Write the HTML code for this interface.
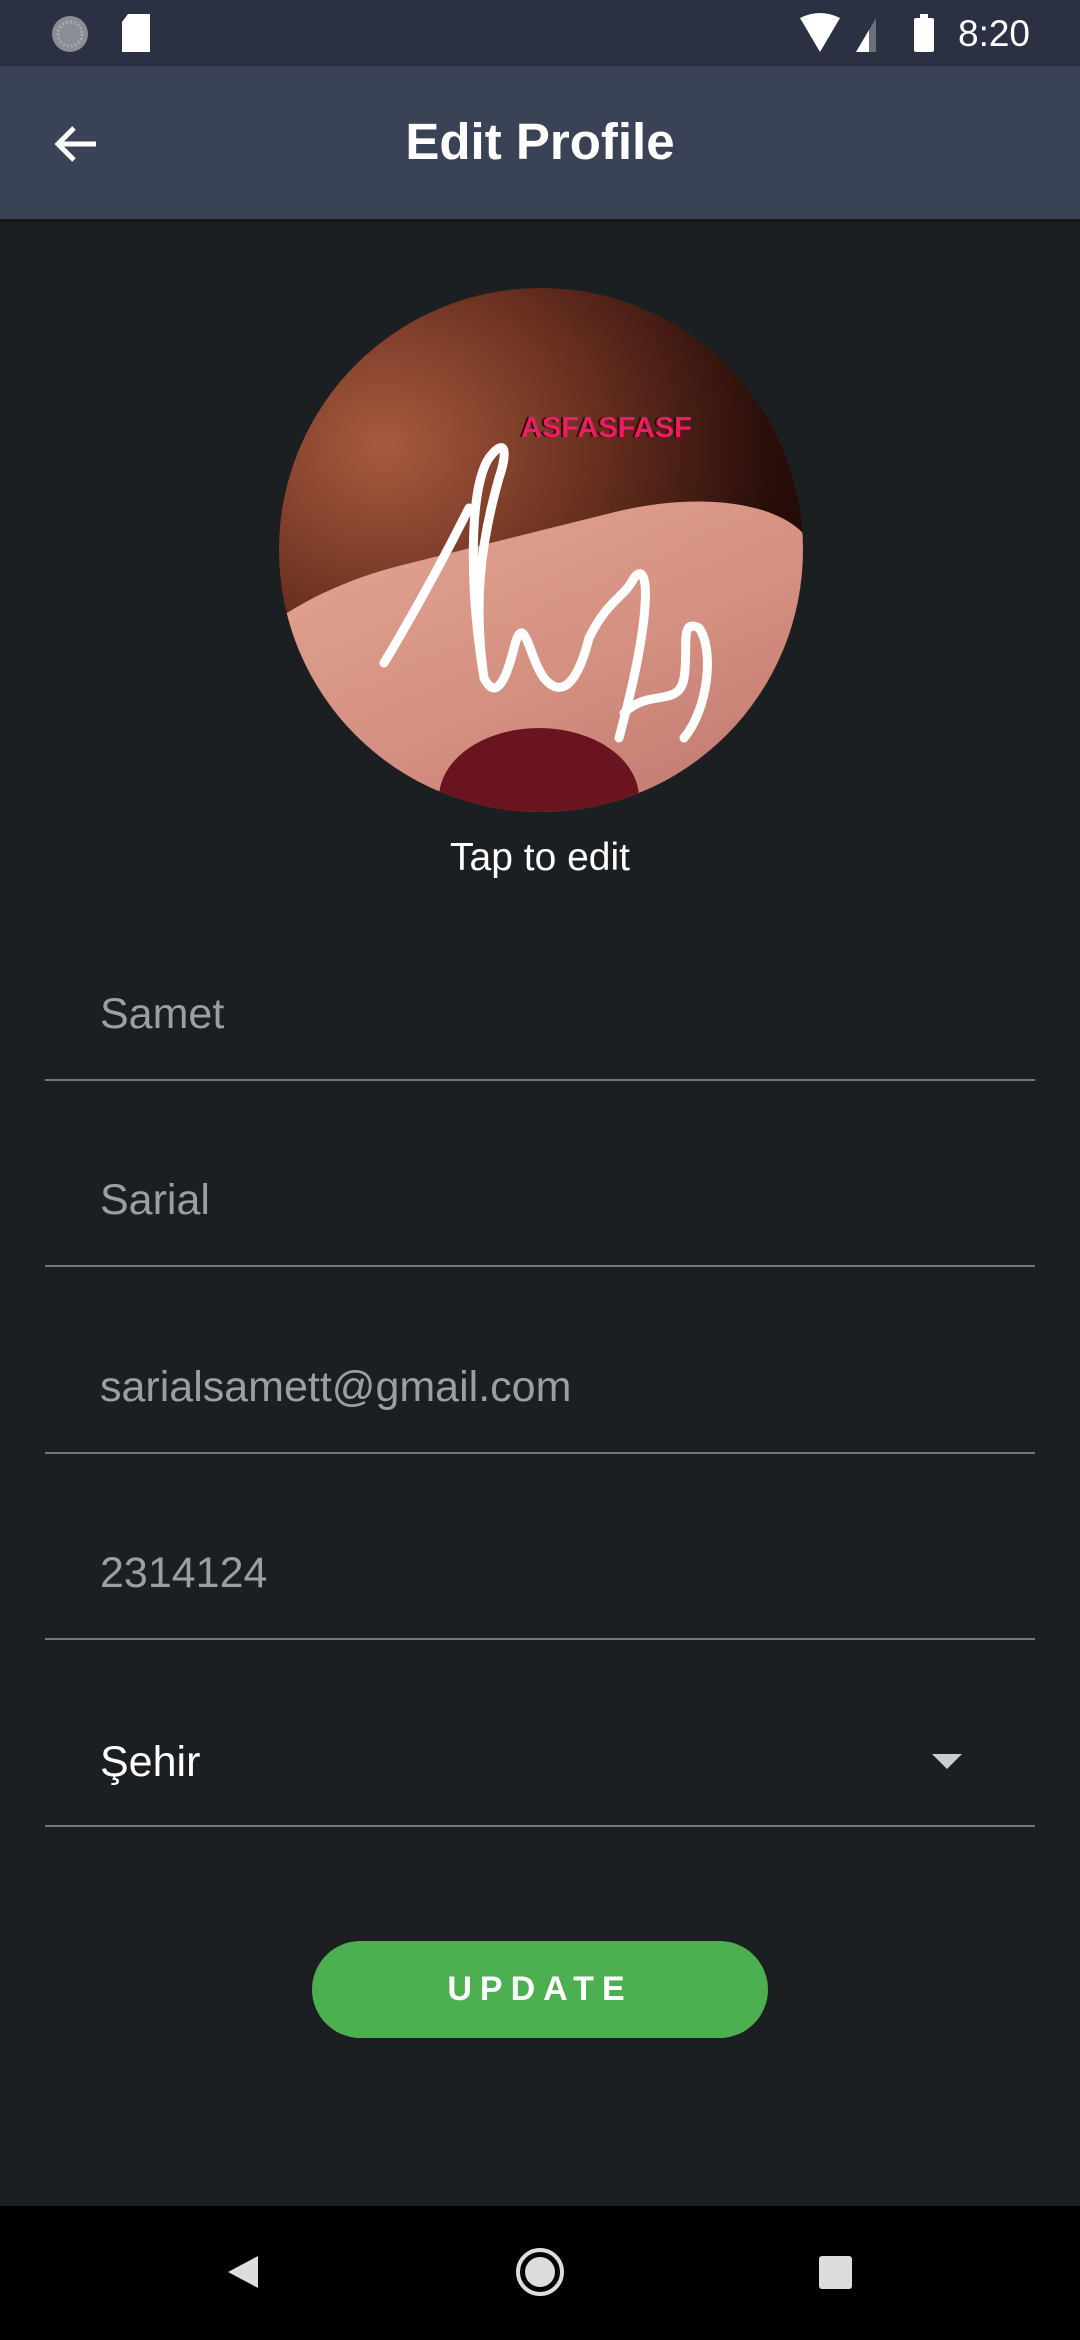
<!DOCTYPE html>
<html><head><meta charset="utf-8"><style>
*{margin:0;padding:0;box-sizing:border-box}
body{width:1080px;height:2340px;background:#1c1f21;font-family:"Liberation Sans",Roboto,sans-serif;position:relative;overflow:hidden}
.abs{position:absolute}
.status{left:0;top:0;width:1080px;height:66px;background:#2b3142}
.appbar{left:0;top:66px;width:1080px;height:153px;background:#3a4356;box-shadow:0 3px 6px rgba(0,0,0,.4)}
.title{left:0;width:1080px;top:112px;text-align:center;color:#fff;font-size:51px;font-weight:bold;line-height:60px}
.field{left:45px;width:990px;height:2px;background:#75787b}
.ftxt{left:100px;color:#9c9ea0;font-size:43px;line-height:48px}
.nav{left:0;top:2206px;width:1080px;height:134px;background:#000}
</style></head><body>
<div class="abs status"></div>
<svg class="abs" style="left:50px;top:14px" width="44" height="40"><circle cx="20" cy="20" r="18" fill="#8a8d95"/><circle cx="20" cy="20" r="12" fill="none" stroke="#aaa" stroke-width="3" stroke-dasharray="2 2"/></svg>
<svg class="abs" style="left:120px;top:12px" width="36" height="44"><path d="M8 2h22v38H2V10z" fill="#fff"/></svg>
<svg class="abs" style="left:798px;top:12px" width="140" height="44"><path d="M2 6 Q22 -4 42 6 L22 40 Z" fill="#fff"/><path d="M58 40 L78 6 V40Z" fill="#6b6f7a"/><path d="M58 40 L71 18 V40Z" fill="#fff"/><rect x="116" y="6" width="20" height="34" rx="2" fill="#fff"/><rect x="122" y="2" width="8" height="6" fill="#fff"/></svg>
<div class="abs" style="left:958px;top:12px;color:#fff;font-size:37px;line-height:44px">8:20</div>
<div class="abs appbar"></div>
<svg class="abs" style="left:52px;top:120px" width="50" height="50"><path d="M44 24H8M22 8 6 24l16 16" stroke="#fff" stroke-width="5" fill="none"/></svg>
<div class="abs title">Edit Profile</div>

<div class="abs" style="left:279px;top:288px;width:524px;height:524px;border-radius:50%;overflow:hidden;background:radial-gradient(ellipse at 20% 30%,#a85a3e 0%,#6a3020 35%,#2a0e0a 65%,#0a0204 100%)">
<div class="abs" style="left:-60px;top:250px;width:620px;height:300px;border-radius:35% 30% 10% 10%;background:linear-gradient(170deg,#e0a090,#d49080 50%,#c07870);transform:rotate(-14deg)"></div>
<div class="abs" style="left:160px;top:440px;width:200px;height:140px;background:#6a1420;border-radius:50%"></div>
<svg class="abs" style="left:0;top:0" width="524" height="524"><path d="M105 375 C150 300 180 240 190 220 M205 390 C190 300 190 200 210 170 C225 150 230 160 220 190 C200 260 195 320 205 390 C215 410 225 400 235 360 C245 320 250 370 265 390 C290 420 305 370 310 350 C330 310 345 310 355 290 C370 270 375 320 340 450 M345 425 C370 400 400 420 405 390 C410 360 400 330 420 340 C435 360 430 420 405 450" stroke="#fff" stroke-width="9" fill="none" stroke-linecap="round"/></svg>
<div class="abs" style="left:242px;top:124px;color:#e91e63;font-weight:bold;font-size:29px;text-shadow:-2px 0 #300">ASFASFASF</div>
</div>
<div class="abs" style="left:0;width:1080px;top:836px;text-align:center;color:#fff;font-size:39px;line-height:44px">Tap to edit</div>

<div class="abs ftxt" style="top:990px">Samet</div><div class="abs field" style="top:1079px"></div>
<div class="abs ftxt" style="top:1176px">Sarial</div><div class="abs field" style="top:1265px"></div>
<div class="abs ftxt" style="top:1363px">sarialsamett@gmail.com</div><div class="abs field" style="top:1452px"></div>
<div class="abs ftxt" style="top:1549px">2314124</div><div class="abs field" style="top:1638px"></div>
<div class="abs ftxt" style="top:1738px;color:#fff">Şehir</div><div class="abs field" style="top:1825px"></div>
<svg class="abs" style="left:932px;top:1754px" width="30" height="16"><path d="M0 0h30L15 15z" fill="#ccc"/></svg>

<div class="abs" style="left:312px;top:1941px;width:456px;height:97px;border-radius:49px;background:#4caf50;color:#fff;font-weight:bold;font-size:34px;letter-spacing:8px;text-align:center;line-height:97px">UPDATE</div>

<div class="abs nav"></div>
<svg class="abs" style="left:222px;top:2252px" width="40" height="40"><path d="M36 4V36L6 20Z" fill="#ddd"/></svg>
<svg class="abs" style="left:514px;top:2246px" width="52" height="52"><circle cx="26" cy="26" r="22" fill="none" stroke="#ddd" stroke-width="4"/><circle cx="26" cy="26" r="15" fill="#ddd"/></svg>
<div class="abs" style="left:819px;top:2256px;width:33px;height:33px;background:#ddd;border-radius:3px"></div>
</body></html>
